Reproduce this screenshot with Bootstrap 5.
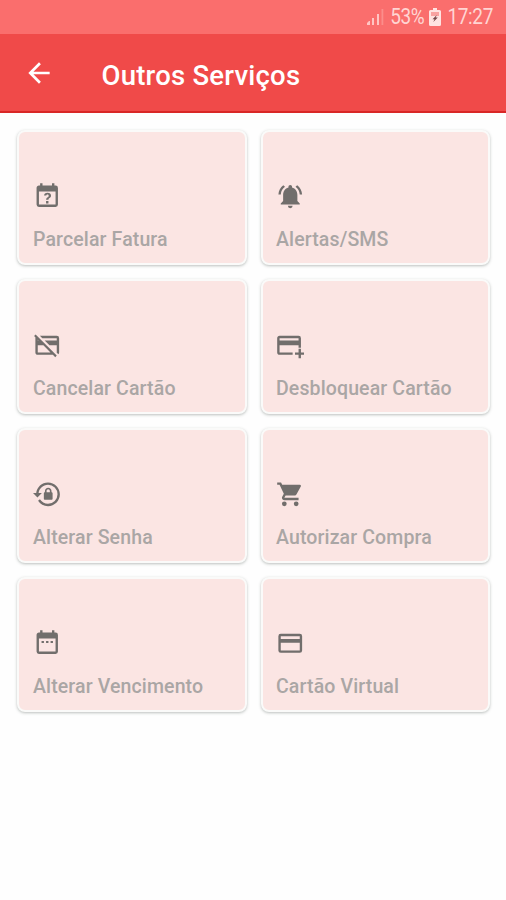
<!DOCTYPE html>
<html lang="pt-BR">
<head>
<meta charset="utf-8">
<meta name="viewport" content="width=device-width, initial-scale=1">
<title>Outros Serviços</title>
<link href="https://cdn.jsdelivr.net/npm/bootstrap@5.3.0/dist/css/bootstrap.min.css" rel="stylesheet">
<style>
body{font-family:Roboto,"Liberation Sans",sans-serif;background:#fefefe;min-height:900px}
.status-bar{height:34px;background:#fa6e6d;color:#ffd5d3;font-size:19px;line-height:36px;padding-right:13px}
.status-bar span{letter-spacing:-.35px;transform:scaleY(1.13);transform-origin:50% 55%}
.status-bar .signal{margin-right:5px}
.status-bar .battery{margin:0 6px 0 5px}
.app-bar{height:79px;background:#f04a49;border-bottom:2px solid #d92726;padding:2px 0 0 23px}
.back-arrow{margin-top:-1px}
.app-title{font-size:27.5px;font-weight:500;line-height:32px;color:#fff;margin:4px 0 0 46.5px;letter-spacing:.22px}
.services{display:grid;grid-template-columns:230px 229px;gap:14px;padding:17px 0 0 17px}
.service{height:135px;border:2.5px solid #fafaf9;border-radius:8px;background:#fbe5e3;box-shadow:0 1px 3px rgba(70,80,75,.36);padding:0 0 11px 14px;color:#aaa6a5;font-size:19.5px;font-weight:500;line-height:24px;letter-spacing:.13px}
.service:nth-child(even){padding-left:13px}
.service svg{width:28.5px;height:28.5px;fill:#716e6c;margin:0 0 18px -.5px}
</style>
<script src="https://cdn.jsdelivr.net/npm/bootstrap@5.3.0/dist/js/bootstrap.bundle.min.js"></script>
</head>
<body>
<div class="status-bar d-flex justify-content-end align-items-center">
  <svg class="signal" width="18" height="18" viewBox="0 0 18 18"><path fill="#ffc5c3" d="M0 17v-2l2-2h1v4zM5 17v-7h2v7zM10 17V6h2v11z"/><path fill="#fc8d8b" d="M14.500 17V1h1.800v16z"/></svg>
  <span>53%</span>
  <svg class="battery" width="12" height="18" viewBox="0 0 12 18"><path fill="#ffe3e1" d="M4 0h4v2h2.500Q12 2 12 3.500v13Q12 18 10.500 18h-9Q0 18 0 16.500v-13Q0 2 1.500 2H4z"/><path fill="#f9a3a1" d="M2 4h8v4H2z"/><path fill="#75484a" d="M7.800 7 3.500 11.200h2L4.300 14l4.500-4.500H6.700z"/></svg>
  <span>17:27</span>
</div>
<header class="app-bar d-flex align-items-center">
  <svg class="back-arrow" width="32" height="32" viewBox="0 0 24 24"><path fill="#fff" d="M20 11H7.830l5.590-5.590L12 4l-8 8 8 8 1.410-1.410L7.830 13H20z"/></svg>
  <h1 class="app-title">Outros Serviços</h1>
</header>
<main class="services">
  <div class="service d-flex flex-column justify-content-end"><svg viewBox="0 0 24 24"><path d="M6,1V3H5C3.890,3 3,3.890 3,5V19A2,2 0 0,0 5,21H19A2,2 0 0,0 21,19V5A2,2 0 0,0 19,3H18V1H16V3H8V1H6M5,8H19V19H5V8M12.190,9C11.320,9 10.620,9.200 10.080,9.590C9.560,10 9.300,10.570 9.310,11.360L9.320,11.390H11.250C11.260,11.090 11.350,10.860 11.530,10.700C11.710,10.550 11.930,10.470 12.190,10.470C12.500,10.470 12.760,10.570 12.940,10.750C13.120,10.940 13.200,11.200 13.200,11.500C13.200,11.820 13.130,12.090 12.970,12.320C12.830,12.550 12.620,12.750 12.360,12.910C11.850,13.250 11.500,13.550 11.310,13.820C11.110,14.080 11,14.500 11,15H13C13,14.690 13.040,14.440 13.130,14.260C13.220,14.070 13.390,13.900 13.640,13.740C14.090,13.500 14.460,13.210 14.750,12.810C15.040,12.410 15.190,12 15.190,11.500C15.190,10.740 14.920,10.130 14.380,9.680C13.850,9.230 13.120,9 12.190,9M11,16V18H13V16H11Z"/></svg><span>Parcelar Fatura</span></div>
  <div class="service d-flex flex-column justify-content-end"><svg viewBox="0 0 24 24"><path d="M7.580 4.080L6.150 2.650C3.750 4.480 2.170 7.300 2.030 10.500h2c.15-2.650 1.510-4.970 3.550-6.420zM19.970 10.500h2c-.15-3.200-1.730-6.020-4.120-7.850l-1.420 1.430c2.020 1.450 3.390 3.770 3.540 6.420zM18 11c0-3.070-1.640-5.640-4.500-6.320V4c0-.83-.67-1.500-1.500-1.500s-1.500.67-1.500 1.500v.68C7.630 5.360 6 7.920 6 11v5l-2 2v1h16v-1l-2-2zM10 20a2 2 0 0 0 4 0z"/></svg><span>Alertas/SMS</span></div>
  <div class="service d-flex flex-column justify-content-end"><svg viewBox="0 0 24 24"><path d="M0.930,4.200L2.210,2.930L20,20.720L18.730,22L16.730,20H4C2.890,20 2,19.100 2,18V6C2,5.780 2.040,5.570 2.110,5.380L0.930,4.200M20,8V6H7.820L5.820,4H20A2,2 0 0,1 22,6V18C22,18.600 21.740,19.130 21.320,19.500L19.820,18H20V12H13.820L9.820,8H20M4,8H4.730L4,7.270V8M4,12V18H14.730L8.730,12H4Z"/></svg><span>Cancelar Cartão</span></div>
  <div class="service d-flex flex-column justify-content-end"><svg viewBox="0 0 24 24"><path d="M21,18H24V20H21V23H19V20H16V18H19V15H21V18M19,8V6H3V8H19M19,12H3V18H14V20H3C1.890,20 1,19.100 1,18V6C1,4.890 1.890,4 3,4H19A2,2 0 0,1 21,6V14H19V12Z"/></svg><span>Desbloquear Cartão</span></div>
  <div class="service d-flex flex-column justify-content-end"><svg viewBox="0 0 24 24"><path d="M12.630,2C18.160,2 22.640,6.500 22.640,12C22.640,17.500 18.160,22 12.630,22C9.120,22 6.050,20.180 4.260,17.430L5.840,16.180C7.250,18.470 9.760,20 12.640,20A8,8 0 0,0 20.640,12A8,8 0 0,0 12.640,4C8.560,4 5.200,7.060 4.710,11H7.470L3.730,14.730L0,11H2.690C3.190,5.950 7.450,2 12.630,2M15.590,10.240C16.090,10.250 16.500,10.650 16.500,11.160V15.770C16.500,16.270 16.090,16.690 15.580,16.690H10.050C9.540,16.690 9.130,16.270 9.130,15.770V11.160C9.130,10.650 9.540,10.250 10.040,10.240V9.230C10.040,7.700 11.290,6.460 12.810,6.460C14.340,6.460 15.590,7.700 15.590,9.230V10.240M12.810,7.860C12.060,7.860 11.440,8.470 11.440,9.230V10.240H14.190V9.230C14.190,8.470 13.570,7.860 12.810,7.860Z"/></svg><span>Alterar Senha</span></div>
  <div class="service d-flex flex-column justify-content-end"><svg viewBox="0 0 24 24"><path d="M17,18A2,2 0 0,1 17,22A2,2 0 0,1 17,18M1,2H4.270L5.210,4H20A1,1 0 0,1 21,5C21,5.170 20.950,5.340 20.880,5.500L17.300,11.970C16.960,12.580 16.300,13 15.550,13H8.100L7.200,14.630L7.170,14.750A0.250,0.250 0 0,0 7.420,15H19V17H7C5.890,17 5,16.100 5,15C5,14.650 5.090,14.320 5.240,14.040L6.600,11.590L3,4H1V2M7,18A2,2 0 0,1 7,22A2,2 0 0,1 7,18Z"/></svg><span>Autorizar Compra</span></div>
  <div class="service d-flex flex-column justify-content-end"><svg viewBox="0 0 24 24"><path d="M6,1V3H5C3.890,3 3,3.890 3,5V19A2,2 0 0,0 5,21H19A2,2 0 0,0 21,19V5A2,2 0 0,0 19,3H18V1H16V3H8V1H6M5,8H19V19H5V8M7.200,10V11.800H9.200V10zM11,10V11.800H13V10zM14.800,10V11.800H16.800V10z"/></svg><span>Alterar Vencimento</span></div>
  <div class="service d-flex flex-column justify-content-end"><svg viewBox="0 0 24 24"><path fill-rule="evenodd" d="M20 4H4Q2 4 2 6v12q0 2 2 2h16q2 0 2-2V6q0-2-2-2zM4 6h16v2.500H4zM4 11.500h16V18H4z"/></svg><span>Cartão Virtual</span></div>
</main>
</body>
</html>
